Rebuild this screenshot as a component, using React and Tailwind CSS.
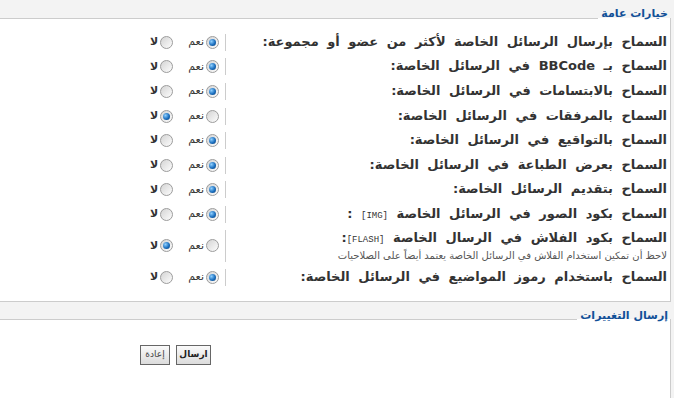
import React from 'react';

const rows = [
  { label: 'السماح بإرسال الرسائل الخاصة لأكثر من عضو أو مجموعة:', yes: true },
  { label: 'السماح بـ BBCode في الرسائل الخاصة:', yes: true },
  { label: 'السماح بالابتسامات في الرسائل الخاصة:', yes: true },
  { label: 'السماح بالمرفقات في الرسائل الخاصة:', yes: false },
  { label: 'السماح بالتواقيع في الرسائل الخاصة:', yes: true },
  { label: 'السماح بعرض الطباعة في الرسائل الخاصة:', yes: true },
  { label: 'السماح بتقديم الرسائل الخاصة:', yes: true },
  { label: 'السماح بكود الصور في الرسائل الخاصة', code: '[IMG]', tail: ' :', yes: true },
  {
    label: 'السماح بكود الفلاش في الرسال الخاصة',
    code: '[FLASH]',
    tail: ':',
    note: 'لاحظ أن تمكين استخدام الفلاش في الرسائل الخاصة يعتمد أيضاً على الصلاحيات',
    yes: false,
  },
  { label: 'السماح باستخدام رموز المواضيع في الرسائل الخاصة:', yes: true },
];

function Radio({ checked }) {
  return (
    <span className="flex h-[13px] w-[13px] items-center justify-center rounded-full border border-[#9c9c9c] bg-gradient-to-br from-[#d4d4d4] to-[#fdfdfd]">
      {checked && (
        <span className="h-[7px] w-[7px] rounded-full bg-[radial-gradient(circle_at_35%_35%,#8fd0ff,#1b6fbf_55%,#0b3a6e)]" />
      )}
    </span>
  );
}

function Row({ row }) {
  const tall = !!row.note;
  return (
    <div className={`flex items-center ${tall ? 'h-[38.4px]' : 'h-[24.6px]'}`}>
      <div
        className={`w-[445px] shrink-0 border-l border-[#cccccc] pr-[3px] ${tall ? 'h-[32px]' : 'h-[17px]'}`}
      >
        <div className="text-[13px] font-bold leading-[16px] text-[#333333] [word-spacing:4px]">
          {row.label}
          {row.code && (
            <>
              {' '}
              <span className="font-['Liberation_Mono',monospace] text-[9px] font-normal [word-spacing:0]">{row.code}</span>
              {row.tail}
            </>
          )}
        </div>
        {row.note && <div className="text-[10px] leading-[15px] text-[#555555]">{row.note}</div>}
      </div>
      <div className="flex items-center pr-[6px] text-[11px] text-[#333333]">
        <label className="flex items-center gap-[2px]">
          <Radio checked={row.yes} />
          <span>نعم</span>
        </label>
        <label className="mr-[15px] flex items-center gap-[2px]">
          <Radio checked={!row.yes} />
          <span className="font-bold">لا</span>
        </label>
      </div>
    </div>
  );
}

export default function App() {
  return (
    <div
      dir="rtl"
      className="flex h-[398px] w-[674px] flex-col overflow-hidden bg-[#f3f3f3] font-['DejaVu_Sans',sans-serif]"
    >
      <fieldset className="mr-[3px] mt-[7px] h-[295px] border border-l-0 border-[#cccccc] bg-white pb-[12px] pt-[1px]">
        <legend className="pb-[8px] pl-[3px] pr-[2px] text-[11px] font-bold leading-[14px] text-[#115098]">
          خيارات عامة
        </legend>
        {rows.map((row, i) => (
          <Row key={i} row={row} />
        ))}
      </fieldset>

      <fieldset className="mr-[3px] mt-[7px] flex-1 border border-b-0 border-l-0 border-[#cccccc] bg-white pt-[16px]">
        <legend className="pb-[6px] pl-[3px] pr-[2px] text-[11px] font-bold leading-[14px] text-[#115098]">
          إرسال التغييرات
        </legend>
        <div className="flex gap-[6px] pr-[459px]">
          <button className="h-[20px] w-[35px] border border-[#666666] bg-gradient-to-b from-[#fafafa] to-[#dcdcdc] text-[9px] font-bold text-[#222222]">
            ارسال
          </button>
          <button className="h-[20px] w-[30px] border border-[#666666] bg-gradient-to-b from-[#fafafa] to-[#dcdcdc] text-[9px] text-[#444444]">
            إعادة
          </button>
        </div>
      </fieldset>
    </div>
  );
}
